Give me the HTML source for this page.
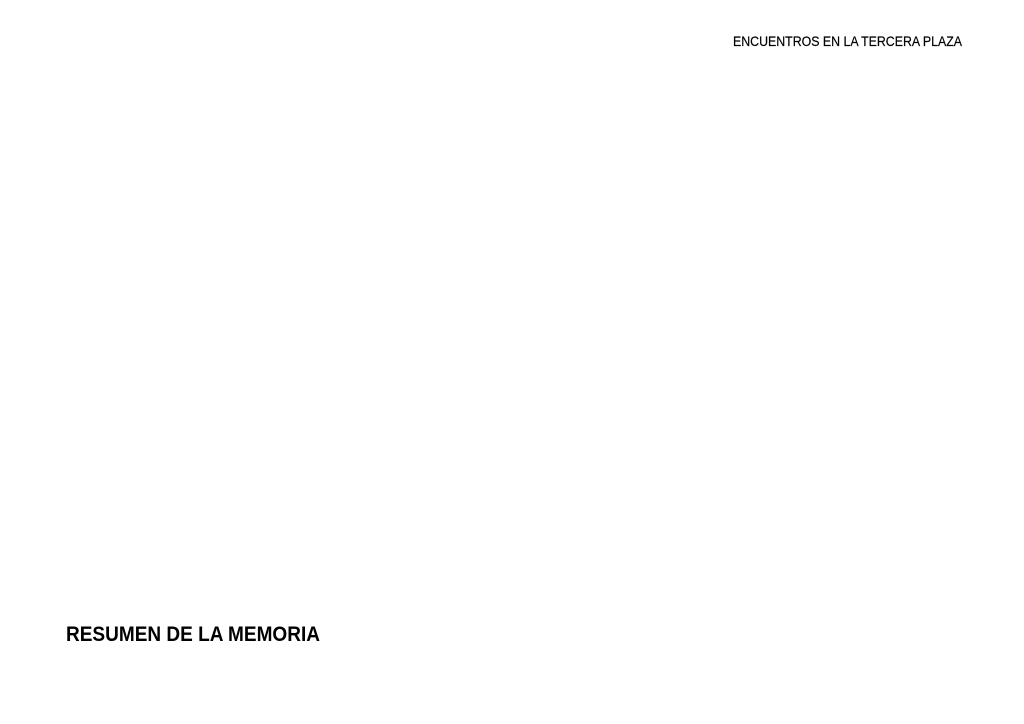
<!DOCTYPE html>
<html><head><meta charset="utf-8"><style>
html,body{margin:0;padding:0;background:#fff;width:1024px;height:724px;overflow:hidden}
svg{position:absolute;left:0;top:0}
</style></head><body>
<svg width="1024" height="724" xmlns="http://www.w3.org/2000/svg">
<text x="733" y="46" font-family="Liberation Sans, sans-serif" font-size="14" fill="#000" stroke="#000" stroke-width="0.2" textLength="229" lengthAdjust="spacingAndGlyphs">ENCUENTROS EN LA TERCERA PLAZA</text>
<text x="66" y="641" font-family="Liberation Sans, sans-serif" font-weight="bold" font-size="21" fill="#000" textLength="254" lengthAdjust="spacingAndGlyphs">RESUMEN DE LA MEMORIA</text>
</svg>
</body></html>
